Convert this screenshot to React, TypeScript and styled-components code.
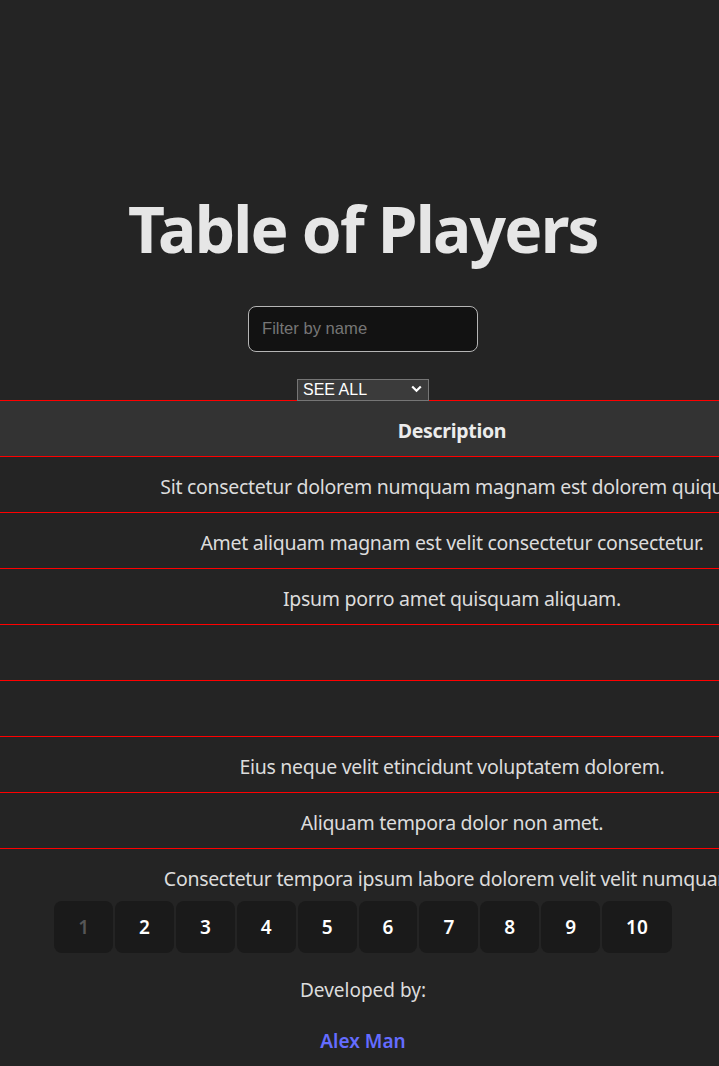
import React from "react";
import styled, { createGlobalStyle } from "styled-components";

const GlobalStyle = createGlobalStyle`
  html, body {
    margin: 0;
    padding: 0;
    background: #242424;
    overflow-x: hidden;
  }
  body {
    font-family: "Noto Sans", "Open Sans", sans-serif;
    color: rgba(255, 255, 255, 0.87);
    -webkit-font-smoothing: antialiased;
  }
`;

const Page = styled.div`
  display: flex;
  flex-direction: column;
  align-items: center;
  padding-left: 7px;
  overflow: hidden;
  min-height: 1066px;
  box-sizing: border-box;
`;

const Title = styled.h1`
  margin: 194px 0 0;
  font-size: 64px;
  line-height: 1.1;
  font-weight: 700;
  color: #e6e6e6;
  letter-spacing: -1.8px;
`;

const FilterInput = styled.input`
  margin-top: 42px;
  width: 230px;
  height: 46px;
  box-sizing: border-box;
  padding: 0 13px;
  border: 1px solid #b5b5b5;
  border-radius: 8px;
  background: #121212;
  color: #eee;
  font-family: "Liberation Sans", Arial, sans-serif;
  font-size: 16.6px;
  outline: none;
  &::placeholder {
    color: #767676;
  }
`;

const SelectWrap = styled.div`
  position: relative;
  margin-top: 26px;
  width: 132px;
  height: 22px;
`;

const Select = styled.select`
  appearance: none;
  -webkit-appearance: none;
  width: 132px;
  height: 22px;
  box-sizing: border-box;
  margin: 0;
  padding: 0 0 0 5px;
  border: 1px solid #767676;
  border-radius: 0;
  background: #3b3b3b;
  color: #fff;
  font-family: "Liberation Sans", Arial, sans-serif;
  font-size: 16px;
  line-height: 20px;
  outline: none;
`;

const Chevron = styled.svg`
  position: absolute;
  right: 7px;
  top: 7px;
  pointer-events: none;
`;

const Table = styled.table`
  width: 1400px;
  flex-shrink: 0;
  table-layout: fixed;
  border-collapse: collapse;
  font-size: 19.5px;
  letter-spacing: -0.3px;
  line-height: 31px;
`;

const HeadCell = styled.th`
  background: #333333;
  border-top: 1px solid #ff0000;
  border-bottom: 1px solid #ff0000;
  padding: 14px 8px 10px;
  font-weight: 700;
  text-align: center;
  color: #ececec;
`;

const Row = styled.tr`
  &:last-child td {
    padding-bottom: 7px;
    border-bottom: none;
  }
`;

const Cell = styled.td`
  border-bottom: 1px solid #ff0000;
  padding: 14px 8px 10px;
  text-align: center;
  white-space: nowrap;
  color: #dcdcdc;
`;

const Pagination = styled.div`
  display: flex;
  gap: 2px;
`;

const PageButton = styled.button<{ $active?: boolean }>`
  border: none;
  border-radius: 8px;
  background: #1a1a1a;
  padding: 11px 24px;
  font-family: "Noto Sans", "Open Sans", sans-serif;
  font-size: 19px;
  line-height: 30px;
  font-weight: 600;
  color: ${(p) => (p.$active ? "#565656" : "#ffffff")};
  cursor: pointer;
`;

const Footer = styled.div`
  margin-top: 23px;
  display: flex;
  flex-direction: column;
  align-items: center;
  gap: 22px;
  font-size: 19px;
  line-height: 28.5px;
`;

const Credit = styled.span`
  color: #dcdcdc;
`;

const AuthorLink = styled.a`
  color: #646cff;
  font-weight: 600;
  text-decoration: none;
`;

const players = [
  { name: "Aliquam", desc: "Sit consectetur dolorem numquam magnam est dolorem quiquia.", pos: "1" },
  { name: "Amet", desc: "Amet aliquam magnam est velit consectetur consectetur.", pos: "2" },
  { name: "Ipsum", desc: "Ipsum porro amet quisquam aliquam.", pos: "3" },
  { name: "Dolor", desc: "", pos: "4" },
  { name: "Velit", desc: "", pos: "5" },
  { name: "Eius", desc: "Eius neque velit etincidunt voluptatem dolorem.", pos: "6" },
  { name: "Tempora", desc: "Aliquam tempora dolor non amet.", pos: "7" },
  { name: "Labore", desc: "Consectetur tempora ipsum labore dolorem velit velit numquam.", pos: "8" },
];

export default function App() {
  return (
    <>
      <GlobalStyle />
      <Page>
        <Title>Table of Players</Title>
        <FilterInput placeholder="Filter by name" />
        <SelectWrap>
          <Select defaultValue="all">
            <option value="all">SEE ALL</option>
            <option value="a">A</option>
          </Select>
          <Chevron width="11" height="8" viewBox="0 0 11 8">
            <path d="M1.2 1.5 L5.5 5.8 L9.8 1.5" fill="none" stroke="#fff" strokeWidth="2.2" />
          </Chevron>
        </SelectWrap>
        <Table>
          <colgroup>
            <col style={{ width: 469 }} />
            <col style={{ width: 640 }} />
            <col style={{ width: 291 }} />
          </colgroup>
          <thead>
            <tr>
              <HeadCell>Name</HeadCell>
              <HeadCell>Description</HeadCell>
              <HeadCell>Position</HeadCell>
            </tr>
          </thead>
          <tbody>
            {players.map((p) => (
              <Row key={p.pos}>
                <Cell>{p.name}</Cell>
                <Cell>{p.desc}</Cell>
                <Cell>{p.pos}</Cell>
              </Row>
            ))}
          </tbody>
        </Table>
        <Pagination>
          {Array.from({ length: 10 }, (_, i) => (
            <PageButton key={i} $active={i === 0}>
              {i + 1}
            </PageButton>
          ))}
        </Pagination>
        <Footer>
          <Credit>Developed by:</Credit>
          <AuthorLink href="#">Alex Man</AuthorLink>
        </Footer>
      </Page>
    </>
  );
}
